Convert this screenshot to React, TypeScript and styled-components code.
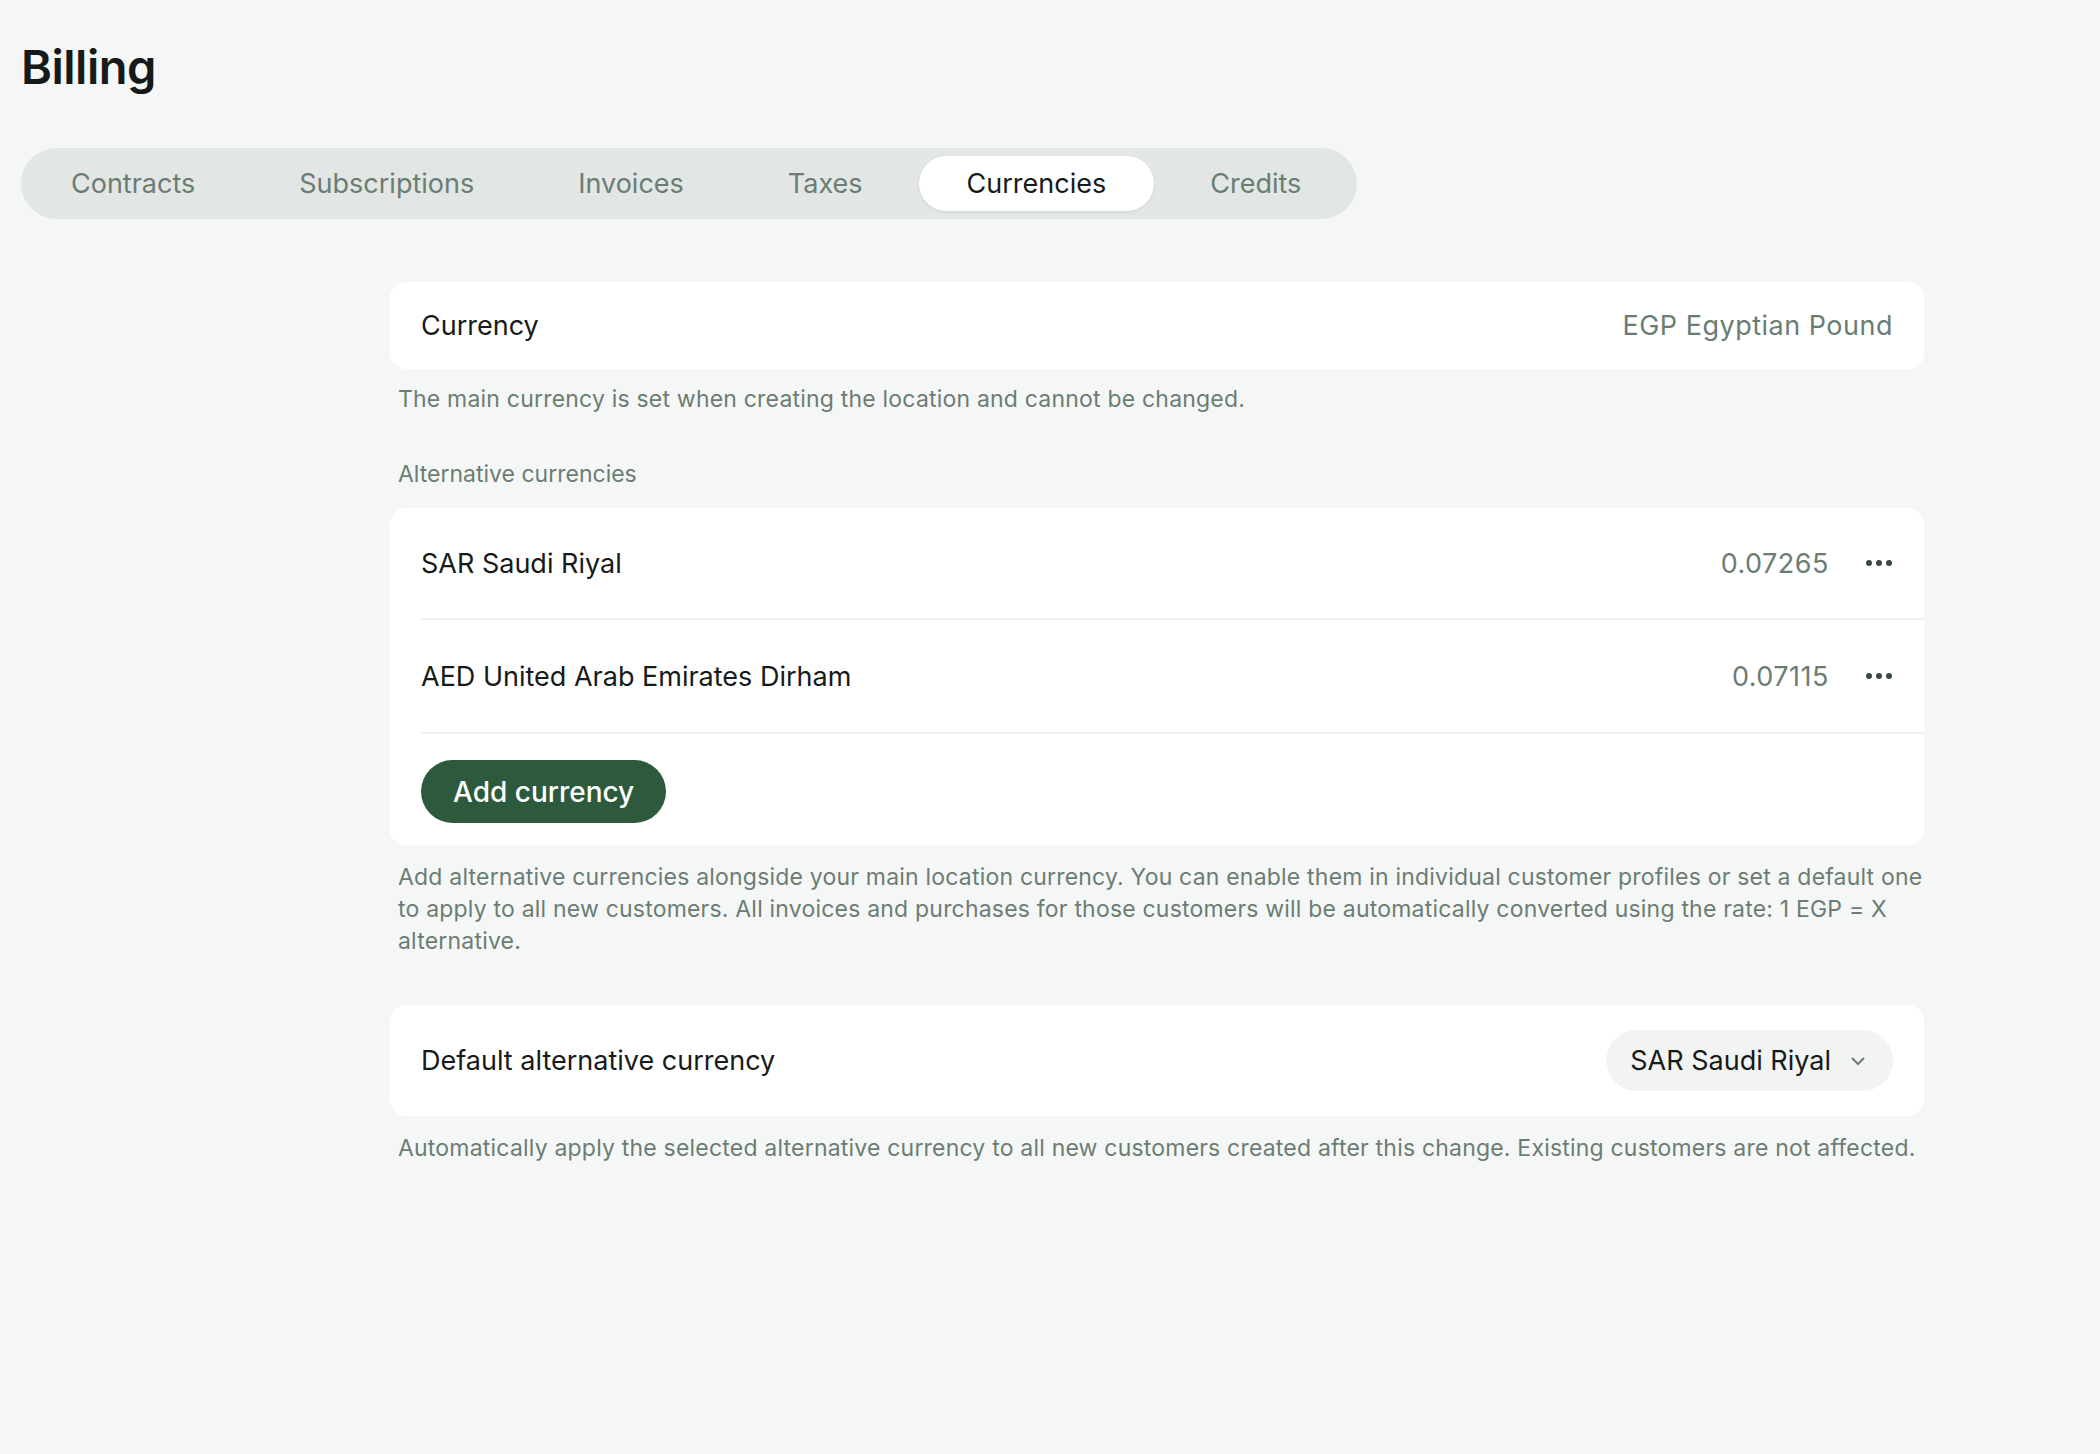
import React from "react";
import styled, { createGlobalStyle } from "styled-components";

const Global = createGlobalStyle`
  html, body { margin: 0; background: #f5f7f6; }
  body { font-family: Inter, "Noto Sans", sans-serif; color: #161a18; }
  * { box-sizing: border-box; }
`;

const Page = styled.div`
  min-height: 1454px;
  padding: 36px 21px 0;
`;
const Title = styled.h1`
  margin: 0;
  font-size: 47px;
  font-weight: 600;
  letter-spacing: -0.5px;
  line-height: 62px;
`;
const TabBar = styled.div`
  display: inline-flex;
  gap: 8px;
  margin-top: 50px;
  background: #e2e6e4;
  border-radius: 36px;
  padding: 8px;
  height: 71px;
  align-items: center;
`;
const Tab = styled.div<{ $active?: boolean }>`
  height: 55px;
  display: flex;
  align-items: center;
  padding: 0 48px;
  border-radius: 28px;
  font-size: 27px;
  color: ${(p) => (p.$active ? "#161a18" : "#6b7d73")};
  background: ${(p) => (p.$active ? "#fff" : "transparent")};
  box-shadow: ${(p) => (p.$active ? "0 1px 3px rgba(0,0,0,0.08)" : "none")};
  &:first-child { padding-left: 42px; }
`;
const Content = styled.div`
  margin: 63px 0 0 369px;
  width: 1534px;
  display: flex;
  flex-direction: column;
`;
const Card = styled.div`
  background: #fff;
  border-radius: 16px;
  overflow: hidden;
`;
const Row = styled.div<{ $h: number; $divider?: boolean }>`
  height: ${(p) => p.$h}px;
  margin-left: 31px;
  padding-right: 31px;
  display: flex;
  align-items: center;
  justify-content: space-between;
  border-bottom: ${(p) => (p.$divider ? "2px solid #eff1f0" : "none")};
`;
const Label = styled.div`
  font-size: 27px;
  color: #161a18;
`;
const Value = styled.div`
  font-size: 27px;
  color: #6b7d73;
  letter-spacing: 0.5px;
`;
const Right = styled.div`
  display: flex;
  align-items: center;
  gap: 36px;
`;
const Help = styled.p<{ $mt: number }>`
  margin: ${(p) => p.$mt}px 0 0 8px;
  font-size: 23px;
  line-height: 32px;
  color: #6b7d73;
  letter-spacing: 0.2px;
`;
const Section = styled.div`
  margin: 45px 0 20px 8px;
  font-size: 23px;
  color: #6b7d73;
`;
const Button = styled.button`
  height: 63px;
  padding: 0 32px;
  border: none;
  border-radius: 32px;
  background: #2d5a3d;
  color: #fff;
  font-family: inherit;
  font-size: 28px;
  font-weight: 500;
`;
const ButtonRow = styled.div`
  padding: 26px 31px 22px;
`;
const Select = styled.div`
  height: 61px;
  padding: 0 26px 0 24px;
  border-radius: 31px;
  background: #f2f4f3;
  display: flex;
  align-items: center;
  gap: 18px;
  font-size: 27px;
`;

const Dots = () => (
  <svg width="28" height="8" viewBox="0 0 28 8">
    <circle cx="4" cy="4" r="3" fill="#3c4a43" />
    <circle cx="14" cy="4" r="3" fill="#3c4a43" />
    <circle cx="24" cy="4" r="3" fill="#3c4a43" />
  </svg>
);

export default function App() {
  const tabs = ["Contracts", "Subscriptions", "Invoices", "Taxes", "Currencies", "Credits"];
  return (
    <Page>
      <Global />
      <Title>Billing</Title>
      <TabBar>
        {tabs.map((t) => (
          <Tab key={t} $active={t === "Currencies"}>{t}</Tab>
        ))}
      </TabBar>
      <Content>
        <Card>
          <Row $h={87}>
            <Label>Currency</Label>
            <Value>EGP Egyptian Pound</Value>
          </Row>
        </Card>
        <Help $mt={14}>The main currency is set when creating the location and cannot be changed.</Help>
        <Section>Alternative currencies</Section>
        <Card>
          <Row $h={112} $divider>
            <Label>SAR Saudi Riyal</Label>
            <Right><Value>0.07265</Value><Dots /></Right>
          </Row>
          <Row $h={114} $divider>
            <Label>AED United Arab Emirates Dirham</Label>
            <Right><Value>0.07115</Value><Dots /></Right>
          </Row>
          <ButtonRow><Button>Add currency</Button></ButtonRow>
        </Card>
        <Help $mt={16}>
          Add alternative currencies alongside your main location currency. You can enable them in individual customer profiles or set a default one to apply to all new customers. All invoices and purchases for those customers will be automatically converted using the rate: 1 EGP = X alternative.
        </Help>
        <Card style={{ marginTop: 48 }}>
          <Row $h={111}>
            <Label>Default alternative currency</Label>
            <Select>
              SAR Saudi Riyal
              <svg width="18" height="12" viewBox="0 0 18 12" fill="none" stroke="#6b7d73" strokeWidth="2">
                <path d="M3 3l6 6 6-6" />
              </svg>
            </Select>
          </Row>
        </Card>
        <Help $mt={16}>
          Automatically apply the selected alternative currency to all new customers created after this change. Existing customers are not affected.
        </Help>
      </Content>
    </Page>
  );
}
